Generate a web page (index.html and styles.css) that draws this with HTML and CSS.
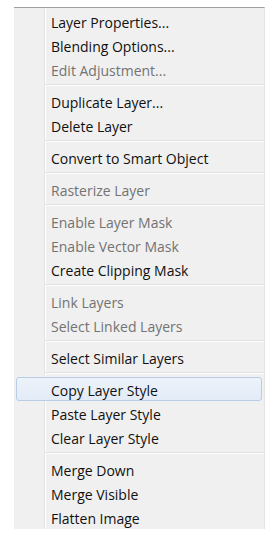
FILE: index.html
```html
<!DOCTYPE html>
<html lang="en">
<head>
  <meta charset="UTF-8">
  <meta name="viewport" content="width=device-width, initial-scale=1.0">
  <title>Layer Menu</title>
  <link rel="stylesheet" href="styles.css">
</head>
<body>
  <ul class="menu">
    <li class="item">Layer Properties...</li>
    <li class="item">Blending Options...</li>
    <li class="item disabled">Edit Adjustment...</li>
    <li class="sep"></li>
    <li class="item">Duplicate Layer...</li>
    <li class="item">Delete Layer</li>
    <li class="sep"></li>
    <li class="item">Convert to Smart Object</li>
    <li class="sep"></li>
    <li class="item disabled">Rasterize Layer</li>
    <li class="sep"></li>
    <li class="item disabled">Enable Layer Mask</li>
    <li class="item disabled">Enable Vector Mask</li>
    <li class="item">Create Clipping Mask</li>
    <li class="sep"></li>
    <li class="item disabled">Link Layers</li>
    <li class="item disabled">Select Linked Layers</li>
    <li class="sep"></li>
    <li class="item">Select Similar Layers</li>
    <li class="sep"></li>
    <li class="item hover">Copy Layer Style</li>
    <li class="item">Paste Layer Style</li>
    <li class="item">Clear Layer Style</li>
    <li class="sep"></li>
    <li class="item">Merge Down</li>
    <li class="item">Merge Visible</li>
    <li class="item">Flatten Image</li>
  </ul>
</body>
</html>
```
FILE: styles.css
```css
body {
  margin: 0;
  background: #fff;
  font-family: "Open Sans", "Noto Sans", sans-serif;
  font-size: 14px;
}

.menu {
  list-style: none;
  width: 250px;
  margin: 7px 0 0 14px;
  padding: 1px 0 0;
  border-top: 1px solid #a0a0a0;
  border-right: 1px solid #e4e4e4;
  background:
    linear-gradient(to right, transparent 30px, #e2e3e3 30px, #e2e3e3 31px, #fff 31px, #fff 32px, transparent 32px),
    #f0f0f0;
}

.menu .item {
  height: 22px;
  line-height: 26px;
  margin: 0 2px;
  padding-left: 34px;
  border: 1px solid transparent;
  border-radius: 3px;
  color: #111;
  white-space: nowrap;
  overflow: hidden;
  cursor: default;
}

.menu .item.disabled {
  color: #737373;
}

.menu .item.hover {
  border-color: #b9cde6;
  background: linear-gradient(to bottom, #eef3fa, #e2ebf7);
}

.menu .sep {
  height: 0;
  margin: 3px 0 3px 31px;
  border-top: 1px solid #e0e0e0;
  border-bottom: 1px solid #fff;
}
```
